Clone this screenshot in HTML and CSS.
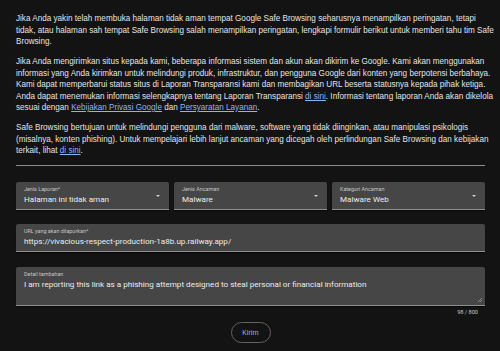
FILE: index.html
```html
<!DOCTYPE html>
<html>
<head>
    <title>Laporkan halaman tidak aman</title>
    <link rel="stylesheet" href="styles.css">
</head>
<body>
    <div class="page">
        <p>Jika Anda yakin telah membuka halaman tidak aman tempat Google Safe Browsing seharusnya menampilkan peringatan, tetapi<br>
        tidak, atau halaman sah tempat Safe Browsing salah menampilkan peringatan, lengkapi formulir berikut untuk memberi tahu tim Safe<br>
        Browsing.</p>
        <p>Jika Anda mengirimkan situs kepada kami, beberapa informasi sistem dan akun akan dikirim ke Google. Kami akan menggunakan<br>
        informasi yang Anda kirimkan untuk melindungi produk, infrastruktur, dan pengguna Google dari konten yang berpotensi berbahaya.<br>
        Kami dapat memperbarui status situs di Laporan Transparansi kami dan membagikan URL beserta statusnya kepada pihak ketiga.<br>
        Anda dapat menemukan informasi selengkapnya tentang Laporan Transparansi <a href="#">di sini</a>. Informasi tentang laporan Anda akan dikelola<br>
        sesuai dengan <a href="#">Kebijakan Privasi Google</a> dan <a href="#">Persyaratan Layanan</a>.</p>
        <p>Safe Browsing bertujuan untuk melindungi pengguna dari malware, software yang tidak diinginkan, atau manipulasi psikologis<br>
        (misalnya, konten phishing). Untuk mempelajari lebih lanjut ancaman yang dicegah oleh perlindungan Safe Browsing dan kebijakan<br>
        terkait, lihat <a href="#">di sini</a>.</p>

        <hr class="divider">

        <form class="report-form">
            <div class="row">
                <div class="field select">
                    <span class="label">Jenis Laporan*</span>
                    <span class="value">Halaman ini tidak aman</span>
                    <span class="arrow"></span>
                </div>
                <div class="field select">
                    <span class="label">Jenis Ancaman</span>
                    <span class="value">Malware</span>
                    <span class="arrow"></span>
                </div>
                <div class="field select">
                    <span class="label">Kategori Ancaman</span>
                    <span class="value">Malware Web</span>
                    <span class="arrow"></span>
                </div>
            </div>

            <div class="field">
                <span class="label">URL yang akan dilaporkan*</span>
                <span class="value">https://vivacious-respect-production-1a8b.up.railway.app/</span>
            </div>

            <div class="details">
                <div class="field textarea">
                    <span class="label">Detail tambahan</span>
                    <span class="value">I am reporting this link as a phishing attempt designed to steal personal or financial information</span>
                    <span class="grip"></span>
                </div>
                <div class="counter">98 / 800</div>
            </div>

            <div class="actions">
                <button type="button">Kirim</button>
            </div>
        </form>
    </div>
</body>
</html>
```

FILE: styles.css
```css
body {
    margin: 0;
    background-color: #131313;
    color: #e3e3e3;
    font-family: "Liberation Sans", Arial, sans-serif;
}

.page {
    padding: 13px 15px 10px 16px;
}

p {
    margin: 0 0 8.5px 0;
    font-size: 8.15px;
    line-height: 11.5px;
    white-space: nowrap;
}

a {
    color: #8ab4f8;
    text-decoration: underline;
}

.divider {
    border: none;
    border-top: 1px solid #8e8e8e;
    margin: 8px 0 16px 0;
}

.report-form {
    font-family: Roboto, "Liberation Sans", sans-serif;
}

.row {
    display: flex;
    gap: 5px;
    margin-bottom: 14px;
}

.row .field {
    flex: 1;
}

/* Filled text fields */
.field {
    position: relative;
    background-color: #464646;
    border-bottom: 1px solid #8f8f8f;
    border-radius: 2px 2px 0 0;
    box-shadow: 0 1px 1px rgba(0, 0, 0, 0.6);
    height: 27px;
    padding: 0 8px;
    margin-bottom: 15px;
}

.row .field {
    margin-bottom: 0;
}

.label {
    display: block;
    padding-top: 3.5px;
    font-size: 5.4px;
    line-height: 7px;
    color: #c4c4c4;
}

.value {
    display: block;
    font-size: 8.1px;
    line-height: 12px;
    color: #ececec;
    white-space: nowrap;
}

.arrow {
    position: absolute;
    right: 9px;
    top: 13px;
    width: 0;
    height: 0;
    border-left: 2.5px solid transparent;
    border-right: 2.5px solid transparent;
    border-top: 2.5px solid #d0d0d0;
}

.field.textarea {
    height: 38px;
    margin-bottom: 2px;
}

.grip {
    position: absolute;
    right: 3px;
    bottom: 3px;
    width: 4px;
    height: 4px;
    background: linear-gradient(135deg, transparent 45%, #8a8a8a 45%, #8a8a8a 55%, transparent 55%, transparent 75%, #8a8a8a 75%, #8a8a8a 85%, transparent 85%);
}

.counter {
    text-align: right;
    font-size: 5.6px;
    line-height: 8px;
    color: #c8c8c8;
    padding-right: 7px;
}

.actions {
    display: flex;
    justify-content: center;
    margin-top: 6px;
}

button {
    background: transparent;
    border: 1px solid #5f6368;
    border-radius: 11px;
    color: #8ab4f8;
    font-family: Roboto, "Liberation Sans", sans-serif;
    font-size: 7px;
    height: 21px;
    width: 40px;
    padding: 0;
    cursor: pointer;
}
```
